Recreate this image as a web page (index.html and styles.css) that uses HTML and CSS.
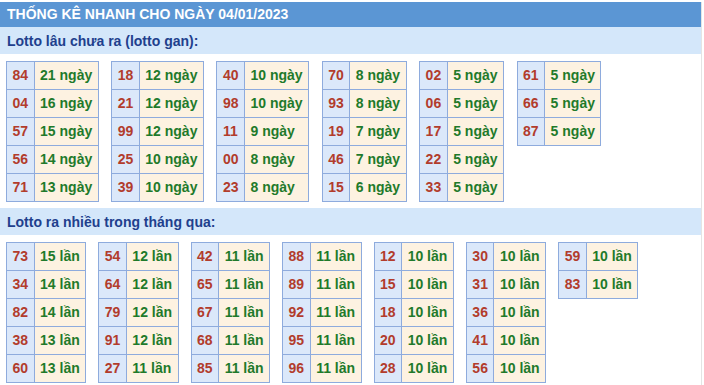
FILE: index.html
```html
<!DOCTYPE html>
<html lang="vi">
<head>
<meta charset="utf-8">
<title>Thống kê nhanh</title>
<link rel="stylesheet" href="styles.css">
</head>
<body>
<div class="page">
  <div class="title">THỐNG KÊ NHANH CHO NGÀY 04/01/2023</div>

  <div class="sub">Lotto lâu chưa ra (lotto gan):</div>
  <div class="group gan">
    <table><tr><td class="n">84</td><td class="v">21 ngày</td></tr><tr><td class="n">04</td><td class="v">16 ngày</td></tr><tr><td class="n">57</td><td class="v">15 ngày</td></tr><tr><td class="n">56</td><td class="v">14 ngày</td></tr><tr><td class="n">71</td><td class="v">13 ngày</td></tr></table>
    <table><tr><td class="n">18</td><td class="v">12 ngày</td></tr><tr><td class="n">21</td><td class="v">12 ngày</td></tr><tr><td class="n">99</td><td class="v">12 ngày</td></tr><tr><td class="n">25</td><td class="v">10 ngày</td></tr><tr><td class="n">39</td><td class="v">10 ngày</td></tr></table>
    <table><tr><td class="n">40</td><td class="v">10 ngày</td></tr><tr><td class="n">98</td><td class="v">10 ngày</td></tr><tr><td class="n">11</td><td class="v">9 ngày</td></tr><tr><td class="n">00</td><td class="v">8 ngày</td></tr><tr><td class="n">23</td><td class="v">8 ngày</td></tr></table>
    <table><tr><td class="n">70</td><td class="v">8 ngày</td></tr><tr><td class="n">93</td><td class="v">8 ngày</td></tr><tr><td class="n">19</td><td class="v">7 ngày</td></tr><tr><td class="n">46</td><td class="v">7 ngày</td></tr><tr><td class="n">15</td><td class="v">6 ngày</td></tr></table>
    <table><tr><td class="n">02</td><td class="v">5 ngày</td></tr><tr><td class="n">06</td><td class="v">5 ngày</td></tr><tr><td class="n">17</td><td class="v">5 ngày</td></tr><tr><td class="n">22</td><td class="v">5 ngày</td></tr><tr><td class="n">33</td><td class="v">5 ngày</td></tr></table>
    <table><tr><td class="n">61</td><td class="v">5 ngày</td></tr><tr><td class="n">66</td><td class="v">5 ngày</td></tr><tr><td class="n">87</td><td class="v">5 ngày</td></tr></table>
  </div>

  <div class="sub">Lotto ra nhiều trong tháng qua:</div>
  <div class="group">
    <table><tr><td class="n">73</td><td class="v">15 lần</td></tr><tr><td class="n">34</td><td class="v">14 lần</td></tr><tr><td class="n">82</td><td class="v">14 lần</td></tr><tr><td class="n">38</td><td class="v">13 lần</td></tr><tr><td class="n">60</td><td class="v">13 lần</td></tr></table>
    <table><tr><td class="n">54</td><td class="v">12 lần</td></tr><tr><td class="n">64</td><td class="v">12 lần</td></tr><tr><td class="n">79</td><td class="v">12 lần</td></tr><tr><td class="n">91</td><td class="v">12 lần</td></tr><tr><td class="n">27</td><td class="v">11 lần</td></tr></table>
    <table><tr><td class="n">42</td><td class="v">11 lần</td></tr><tr><td class="n">65</td><td class="v">11 lần</td></tr><tr><td class="n">67</td><td class="v">11 lần</td></tr><tr><td class="n">68</td><td class="v">11 lần</td></tr><tr><td class="n">85</td><td class="v">11 lần</td></tr></table>
    <table><tr><td class="n">88</td><td class="v">11 lần</td></tr><tr><td class="n">89</td><td class="v">11 lần</td></tr><tr><td class="n">92</td><td class="v">11 lần</td></tr><tr><td class="n">95</td><td class="v">11 lần</td></tr><tr><td class="n">96</td><td class="v">11 lần</td></tr></table>
    <table><tr><td class="n">12</td><td class="v">10 lần</td></tr><tr><td class="n">15</td><td class="v">10 lần</td></tr><tr><td class="n">18</td><td class="v">10 lần</td></tr><tr><td class="n">20</td><td class="v">10 lần</td></tr><tr><td class="n">28</td><td class="v">10 lần</td></tr></table>
    <table><tr><td class="n">30</td><td class="v">10 lần</td></tr><tr><td class="n">31</td><td class="v">10 lần</td></tr><tr><td class="n">36</td><td class="v">10 lần</td></tr><tr><td class="n">41</td><td class="v">10 lần</td></tr><tr><td class="n">56</td><td class="v">10 lần</td></tr></table>
    <table><tr><td class="n">59</td><td class="v">10 lần</td></tr><tr><td class="n">83</td><td class="v">10 lần</td></tr></table>
  </div>
</div>
</body>
</html>
```
FILE: styles.css
```css
html, body {
  margin: 0;
  padding: 0;
  background: #ffffff;
}

body {
  font-family: "Liberation Sans", Arial, sans-serif;
  font-size: 14px;
  font-weight: bold;
}

.page {
  width: 701px;
  margin-top: 2px;
  border-right: 1px solid #e4e4e4;
  min-height: 383px;
}

.title {
  background: #5b96d4;
  color: #ffffff;
  height: 25px;
  line-height: 25px;
  padding: 0 7px;
  white-space: nowrap;
}

.sub {
  background: #d4e7fa;
  color: #213f8d;
  height: 25px;
  line-height: 25px;
  padding: 2px 7px 0;
}

.group {
  display: flex;
  align-items: flex-start;
  gap: 12px;
  padding: 7px 0 6px 6px;
}

.gan {
  gap: 12.5px;
}

table {
  border-collapse: collapse;
}

td {
  border: 1px solid #8eabdd;
  height: 27px;
  line-height: 27px;
  padding: 0 5.5px;
  white-space: nowrap;
}

td.n {
  background: #dbe8fa;
  color: #b23c2c;
}

td.v {
  background: #fdf2e1;
  color: #1f7a2b;
}
```
